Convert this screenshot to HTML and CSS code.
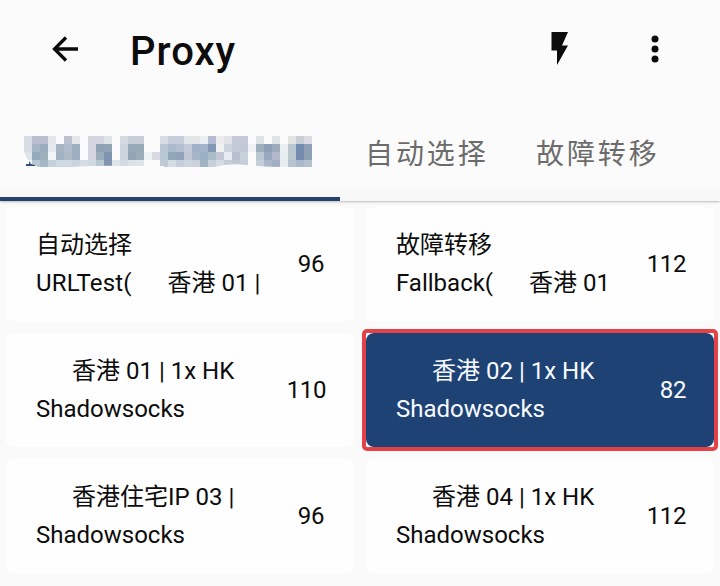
FILE: index.html
```html
<!DOCTYPE html>
<html lang="zh-CN">
<head>
<meta charset="utf-8">
<title>Proxy</title>
<link rel="stylesheet" href="styles.css">
</head>
<body>
<header class="header">
  <div class="toolbar">
    <svg class="icon back" viewBox="0 0 30 30"><path d="M27 15H4M15 3.500 3.500 15 15 26.500" fill="none" stroke="currentColor" stroke-width="3.300"/></svg>
    <h1 class="title">Proxy</h1>
    <svg class="icon bolt" viewBox="0 0 18 34"><path d="M.5 0H17L11 13.500H17L6 33V18.500H.5Z" fill="currentColor"/></svg>
    <svg class="icon more" viewBox="0 0 8 28"><circle cx="4" cy="4" r="3.500"/><circle cx="4" cy="14" r="3.500"/><circle cx="4" cy="24" r="3.500"/></svg>
  </div>
  <nav class="tabs">
    <div class="tab tab-active"><svg class="mosaic" id="mosaic" viewBox="0 0 288 32"></svg></div>
    <div class="tab">自动选择</div>
    <div class="tab">故障转移</div>
  </nav>
</header>
<main class="grid">
  <div class="card"><div class="info"><p>自动选择</p><p><span class="group-type">URLTest(</span><span class="flag"></span>香港 01 |</p></div><span class="delay delay-short">96</span></div>
  <div class="card"><div class="info"><p>故障转移</p><p>Fallback(<span class="flag"></span>香港 01</p></div><span class="delay">112</span></div>
  <div class="card"><div class="info"><p><span class="flag"></span>香港 01 | 1x HK</p><p>Shadowsocks</p></div><span class="delay">110</span></div>
  <div class="card-frame"><div class="card card-selected"><div class="info"><p><span class="flag"></span>香港 02 | 1x HK</p><p>Shadowsocks</p></div><span class="delay">82</span></div></div>
  <div class="card"><div class="info"><p><span class="flag"></span>香港住宅IP 03 |</p><p>Shadowsocks</p></div><span class="delay delay-short">96</span></div>
  <div class="card"><div class="info"><p><span class="flag"></span>香港 04 | 1x HK</p><p>Shadowsocks</p></div><span class="delay">112</span></div>
</main>
<script src="mosaic.js"></script>
</body>
</html>
```
FILE: styles.css
```css
* { box-sizing: border-box; }
body {
  margin: 0;
  height: 586px;
  overflow: hidden;
  background: #fafafa;
  color: #0c0c0c;
  font-family: Roboto, "Noto Sans CJK SC", sans-serif;
}
.header {
  height: 201px;
  background: linear-gradient(#fbfbfb 180px, #f6f6f6);
  box-shadow: 0 0 3px rgba(0, 0, 0, .45);
}
.toolbar {
  display: flex;
  align-items: center;
  height: 98px;
  padding: 0 61px 0 51px;
}
.icon { display: block; flex: none; }
.back { width: 30px; height: 30px; }
.title {
  flex: 1;
  margin: 5px 0 0 49px;
  font-size: 40px;
  line-height: 48px;
  font-weight: 500;
  letter-spacing: 1px;
}
.bolt { width: 18px; height: 34px; margin-right: 82px; }
.more { width: 8px; height: 28px; fill: currentColor; }
.tabs { display: flex; height: 103px; }
.tab {
  flex: none;
  width: 171px;
  padding: 36px 0 0 25px;
  color: #6b6b6b;
  font-size: 28px;
  line-height: 42px;
  letter-spacing: 2.900px;
}
.tab-active {
  width: 340px;
  padding: 38px 0 0 24px;
  border-bottom: 4px solid #24426b;
}
.mosaic { display: block; width: 288px; height: 32px; }
.grid {
  display: grid;
  grid-template-columns: 348px 348px;
  grid-auto-rows: 114px;
  gap: 12px;
  padding: 6px;
}
.card {
  display: flex;
  align-items: center;
  height: 114px;
  padding: 0 28px 0 30px;
  border-radius: 8px;
  background: #fefefe;
  font-size: 24px;
}
.info { flex: 1; }
.info p { margin: 0; line-height: 38px; white-space: nowrap; }
.group-type { letter-spacing: .15px; }
.flag { display: inline-block; width: 36px; }
.delay { line-height: 38px; letter-spacing: -.4px; }
.delay-short { margin-right: 2px; }
.card-frame {
  margin: -4px;
  border: 4px solid #e34348;
  border-radius: 5px;
  background: #fefefe;
}
.card-selected { background: #1f4274; color: #f7fbff; }
```
FILE: mosaic.js
```javascript
// Pixelated tab label: 8px cells, "-" leaves a cell empty.
const rows = [
  "d7dbe4 b9bfcf b9bfcf e3e6ea - bac0ce e3e7e8 - d3d6e0 d3d6e0 dfe4e8 - d4dae2 c7cdd6 c7cdd6 - - d5dde3 c5cddb c5cddb e2e6e9 e2e6e9 e8eef2 b4bcd2 ececef e0e3e8 c5cad8 c5cad8 - dde3e3 - dfe5e4 - e0e4e3 c8ccd5 dcdbe3",
  "d8dde5 a8b5c6 9aabbd e6e9ed a5b4c3 b1bdcd 9bafbf - d3d6e2 8fa2b4 91a2b5 - ccd5de 97aab8 97aab8 - - b9c6d4 adbacd b3bfcf c2c9d7 a2b1c7 a3b3c8 8298b4 f0f0f2 cbd4df c3cad6 c3c8d6 eef0f3 9eb0bd 8da0b6 9dacbc e8eef1 b9c8d0 738db0 8e9fb4",
  "dfe4e8 94a9ba 9fb0bd f3f5f6 9fb2c1 adbcc4 9eafc2 - d3d6e2 9aacb9 8093ae - cbd3db 93a5b5 9bacb9 edf3f3 d8dae3 bac7d5 90a6b9 8fa3b8 c0c6d4 a8b5c9 9bb0c2 a8bbc6 c3c7d5 e6ecf0 b8bfd1 c6d3d9 - bac8d1 97a8bd b3b9cb e7eef0 bac8cf 7588ae 8da0b1",
  "f0f4f6 b8c7d3 a5b6c6 c5d2dc d0dae2 d0dae2 c9d4df d4dde4 d0d8e2 b9c7d3 8093b0 dfe4e9 d3dae1 dbe1e6 dfe2e6 - - c0cad6 d5dbe3 c5ceda ccd5de cdd0dd a2b4c4 c5d1dc d5dbe3 c4ced8 bcc8d2 c5ceda - c3ced9 a9b7c8 a2aec1 e6edf0 b7c4d0 a9b8cb b3c1d0"
];
const mosaic = document.getElementById("mosaic");
function add(name, attrs) {
  const el = document.createElementNS("http://www.w3.org/2000/svg", name);
  for (const key in attrs) el.setAttribute(key, attrs[key]);
  mosaic.appendChild(el);
}
rows.forEach((row, y) => row.split(" ").forEach((color, x) => {
  if (color !== "-") add("rect", { x: x * 8, y: y * 8, width: 8, height: y === 3 ? 7 : 8, fill: "#" + color });
}));
add("path", { d: "M0 16Q4 29 18 32H0Z", fill: "#fbfbfb" });
add("path", { d: "M2 28H5V25L7 28 11 29V30H2Z", fill: "#31517e" });
add("path", { d: "M35 32Q70 29 100 30H140V32Z", fill: "#fbfbfb" });
add("path", { d: "M190 31Q205 27 222 29 242 31 260 31V32H190Z", fill: "#fbfbfb" });
```
